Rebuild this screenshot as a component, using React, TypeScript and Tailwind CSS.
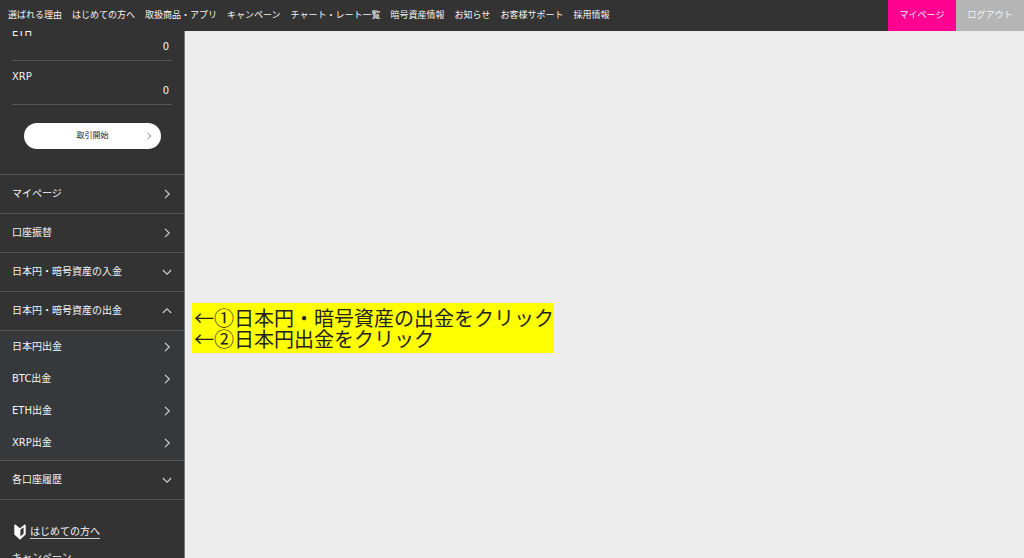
import { useState } from 'react';
import { clsx } from 'clsx';

const navItems = [
  '選ばれる理由',
  'はじめての方へ',
  '取扱商品・アプリ',
  'キャンペーン',
  'チャート・レート一覧',
  '暗号資産情報',
  'お知らせ',
  'お客様サポート',
  '採用情報',
];

const balances = [
  { currency: 'ETH', amount: 0 },
  { currency: 'XRP', amount: 0 },
];

interface MenuItem {
  label: string;
  children?: string[];
}

const menuItems: MenuItem[] = [
  { label: 'マイページ' },
  { label: '口座振替' },
  { label: '日本円・暗号資産の入金', children: [] },
  {
    label: '日本円・暗号資産の出金',
    children: ['日本円出金', 'BTC出金', 'ETH出金', 'XRP出金'],
  },
  { label: '各口座履歴', children: [] },
];

function Chevron({ className }: { className?: string }) {
  return (
    <svg
      viewBox="0 0 10 10"
      className={clsx('shrink-0', className)}
      fill="none"
      stroke="currentColor"
      strokeWidth="1.2"
      aria-hidden="true"
    >
      <path d="M3 0.8 7.2 5 3 9.2" />
    </svg>
  );
}

function BeginnerMark() {
  return (
    <svg viewBox="0 0 12 16" className="h-4 w-3 shrink-0" aria-hidden="true">
      <path d="M0.3 1.2Q0.3 0.2 1.3 0.6L6 4.2 10.7 0.6Q11.7 0.2 11.7 1.2V10.4L6 15.8 0.3 10.4Z" fill="#fff" />
      <path d="M6.4 5.8 9.6 3.2V9.4L6.4 12.4Z" fill="#333" />
    </svg>
  );
}

function Header() {
  return (
    <header className="flex h-[31px] shrink-0 bg-[#333] text-[9px] text-[#f4f4f4]">
      <nav className="flex flex-1 items-center gap-2.5 whitespace-nowrap pl-2">
        {navItems.map((item) => (
          <a key={item} href="#">
            {item}
          </a>
        ))}
      </nav>
      <a href="#" className="flex w-[68px] items-center justify-center bg-[#ff0090]">
        マイページ
      </a>
      <button type="button" className="w-[68px] bg-[#b5b5b5]">
        ログアウト
      </button>
    </header>
  );
}

function Sidebar() {
  const [open, setOpen] = useState('日本円・暗号資産の出金');

  return (
    <aside className="w-[185px] shrink-0 overflow-hidden border-r border-[#777] bg-[#333] text-[10px] text-[#f4f4f4]">
      <div className="-mt-3.5">
        {/* Balances */}
        <dl className="px-3">
          {balances.map((b) => (
            <div key={b.currency} className="border-b border-[#555] pt-[9px] pb-1.5 leading-[14px]">
              <dt>{b.currency}</dt>
              <dd className="pr-[3px] text-right">{b.amount}</dd>
            </div>
          ))}
        </dl>

        <button
          type="button"
          className="mx-6 mt-[18px] mb-[25px] flex h-[26px] w-[137px] items-center rounded-full bg-white px-2 text-[8px] text-[#222]"
        >
          <span className="flex-1 pl-2">取引開始</span>
          <Chevron className="size-2 text-[#888]" />
        </button>

        {/* Menu */}
        <ul className="border-b border-[#555]">
          {menuItems.map((item) => {
            const isOpen = open === item.label;
            const rowClass = 'flex h-[38px] w-full items-center justify-between px-3';

            return (
              <li key={item.label} className="border-t border-[#555]">
                {item.children ? (
                  <button
                    type="button"
                    aria-expanded={isOpen}
                    onClick={() => setOpen(isOpen ? '' : item.label)}
                    className={rowClass}
                  >
                    <span className="pb-0.5">{item.label}</span>
                    <Chevron className={clsx('size-2.5 text-[#ccc]', isOpen ? '-rotate-90' : 'rotate-90')} />
                  </button>
                ) : (
                  <a href="#" className={rowClass}>
                    <span className="pb-0.5">{item.label}</span>
                    <Chevron className="size-2.5 text-[#ccc]" />
                  </a>
                )}
                {isOpen && item.children && (
                  <ul className="border-t border-[#555] bg-[#36393b] pb-px">
                    {item.children.map((child) => (
                      <li key={child}>
                        <a href="#" className="flex h-8 items-center justify-between px-3">
                          <span className="pb-0.5">{child}</span>
                          <Chevron className="size-2.5 text-[#ccc]" />
                        </a>
                      </li>
                    ))}
                  </ul>
                )}
              </li>
            );
          })}
        </ul>

        {/* Guide links */}
        <div className="flex flex-col items-start gap-2.5 px-3 pt-6 leading-4">
          <a href="#" className="flex items-center gap-1 pl-0.5">
            <BeginnerMark />
            <span className="border-b border-[#ccc] leading-[13px]">はじめての方へ</span>
          </a>
          <a href="#">キャンペーン</a>
        </div>
      </div>
    </aside>
  );
}

export default function App() {
  return (
    <div className="flex h-screen flex-col overflow-hidden bg-[#ececec] font-['DejaVu_Sans','Noto_Sans_CJK_JP',sans-serif]">
      <Header />
      <div className="flex min-h-0 flex-1">
        <Sidebar />
        <main className="flex flex-1 items-start pt-[272px] pl-[7px]">
          <p className="bg-[#ff0] py-1 pl-0.5 font-['Noto_Sans_CJK_JP',sans-serif] text-[20px] leading-[21px] whitespace-nowrap text-[#222]">
            ←①日本円・暗号資産の出金をクリック
            <br />
            ←②日本円出金をクリック
          </p>
        </main>
      </div>
    </div>
  );
}
